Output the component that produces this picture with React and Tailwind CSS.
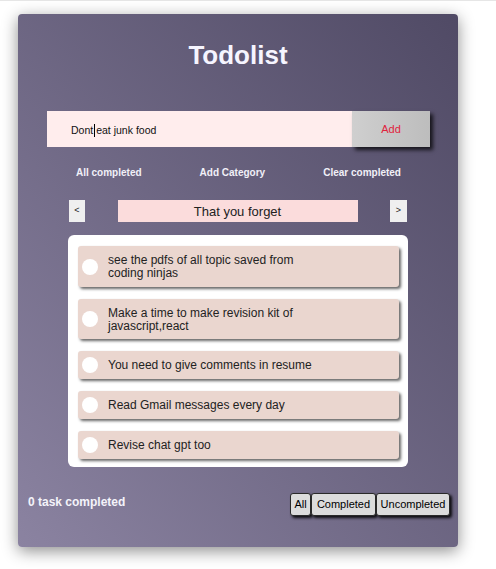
import { useState } from "react";

const todos = [
  { text: "see the pdfs of all topic saved from coding ninjas", h: "h-[41px]" },
  { text: "Make a time to make revision kit of javascript,react", h: "h-[40px]" },
  { text: "You need to give comments in resume", h: "h-[28px]" },
  { text: "Read Gmail messages every day", h: "h-[28px]" },
  { text: "Revise chat gpt too", h: "h-[28px]" },
];

const App = () => {
  const [filter, setFilter] = useState("all");

  return (
    <div className="min-h-screen bg-white border-t border-[#e6e6e6] font-['Liberation_Sans',Arial,sans-serif]">
      <div className="ml-[18px] mt-[13px] w-[440px] rounded-[4px] bg-linear-to-tr from-[#8b83a1] to-[#504a65] shadow-[0_4px_16px_rgba(0,0,0,0.45)] pt-[25px] pb-[31px]">
        <h1 className="text-center text-[26px] leading-[32px] font-bold text-[#f6f5ff]">
          Todolist
        </h1>

        {/* input */}
        <div className="mr-[28px] ml-[29px] mt-[40px] flex h-[36px]">
          <div className="flex flex-1 items-center bg-[#ffeded] pl-[24px] pt-[3px] text-[10.5px] text-[#111]">
            Dont
            <span className="mx-[1px] inline-block h-[13px] w-px bg-black" />
            eat junk food
          </div>
          <button className="w-[78px] bg-linear-to-r from-[#cfcfcf] to-[#bdbdbd] text-[11px] text-[#e0233d] shadow-[3px_3px_4px_rgba(0,0,0,0.75)]">
            Add
          </button>
        </div>

        {/* actions */}
        <div className="mr-[28px] ml-[29px] mt-[19px] flex justify-around text-[10px] leading-[14px] font-bold text-[#f1f0f8]">
          <span>All completed</span>
          <span>Add Category</span>
          <span>Clear completed</span>
        </div>

        {/* category nav */}
        <div className="mx-[51px] mt-[20px] flex items-center justify-between">
          <button className="flex h-[22px] w-[16px] items-center justify-center bg-[#efefef] text-[9px] text-[#222]">
            &lt;
          </button>
          <div className="flex h-[22px] w-[240px] items-center justify-center bg-[#fbdcdc] pt-[1px] text-[13px] text-[#222]">
            That you forget
          </div>
          <button className="flex h-[22px] w-[17px] items-center justify-center bg-[#efefef] text-[9px] text-[#222]">
            &gt;
          </button>
        </div>

        {/* list */}
        <div className="mx-[50px] mt-[13px] flex flex-col gap-[12px] rounded-[6px] bg-white pl-[10px] pr-[9px] pt-[11px] pb-[8px]">
          {todos.map((t) => (
            <div
              key={t.text}
              className={`${t.h} flex items-center rounded-[3px] bg-[#ead6cf] pl-[4px] shadow-[2px_2px_3px_rgba(0,0,0,0.6)]`}
            >
              <span className="h-[16px] w-[16px] shrink-0 rounded-full bg-white" />
              <span className="ml-[10px] w-[215px] pt-[1px] text-[12px] leading-[13px] text-[#222]">
                {t.text}
              </span>
            </div>
          ))}
        </div>

        {/* footer */}
        <div className="mt-[26px] flex items-start justify-between pl-[10px] pr-[8px]">
          <span className="mt-[2px] text-[12px] leading-[15px] font-bold text-[#f4f3fa]">
            0 task completed
          </span>
          <div className="flex">
            {[
              ["all", "All", "w-[21px]"],
              ["completed", "Completed", "w-[65px]"],
              ["uncompleted", "Uncompleted", "w-[74px]"],
            ].map(([k, label, w]) => (
              <button
                key={k}
                onClick={() => setFilter(k)}
                className={`${w} h-[23px] rounded-[3px] border border-[#2a2a2a] bg-[#dcdcdc] text-[11px] text-black shadow-[2px_2px_3px_rgba(0,0,0,0.9)]`}
              >
                {label}
              </button>
            ))}
          </div>
        </div>
      </div>
    </div>
  );
};

export default App;
